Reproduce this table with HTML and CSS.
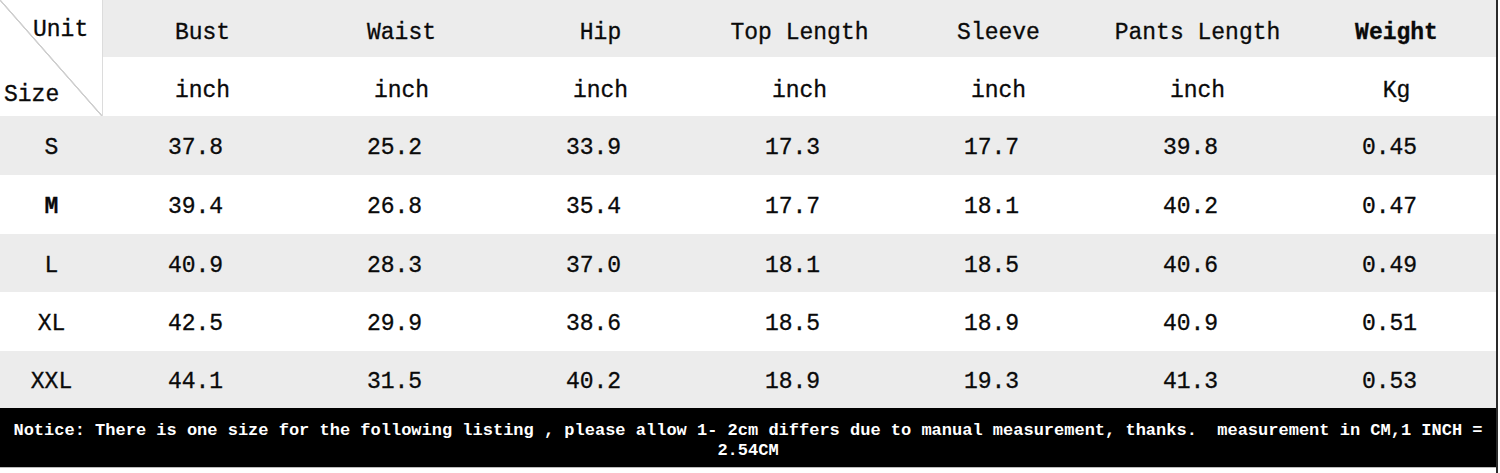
FILE: index.html
```html
<!DOCTYPE html>
<html>
<head>
<meta charset="utf-8">
<link rel="stylesheet" href="styles.css">
</head>
<body>
<div class="chart">
  <div class="table">
    <div class="corner">
      <span class="unit">Unit</span>
      <span class="size">Size</span>
    </div>
    <div class="hd gray">Bust</div>
    <div class="hd gray">Waist</div>
    <div class="hd gray">Hip</div>
    <div class="hd gray">Top Length</div>
    <div class="hd gray">Sleeve</div>
    <div class="hd gray">Pants Length</div>
    <div class="hd gray bold">Weight</div>

    <div class="hd">inch</div>
    <div class="hd">inch</div>
    <div class="hd">inch</div>
    <div class="hd">inch</div>
    <div class="hd">inch</div>
    <div class="hd">inch</div>
    <div class="hd">Kg</div>

    <div class="sz gray">S</div>
    <div class="num gray">37.8</div><div class="num gray">25.2</div><div class="num gray">33.9</div><div class="num gray">17.3</div><div class="num gray">17.7</div><div class="num gray">39.8</div><div class="num gray">0.45</div>

    <div class="sz bold">M</div>
    <div class="num">39.4</div><div class="num">26.8</div><div class="num">35.4</div><div class="num">17.7</div><div class="num">18.1</div><div class="num">40.2</div><div class="num">0.47</div>

    <div class="sz gray">L</div>
    <div class="num gray">40.9</div><div class="num gray">28.3</div><div class="num gray">37.0</div><div class="num gray">18.1</div><div class="num gray">18.5</div><div class="num gray">40.6</div><div class="num gray">0.49</div>

    <div class="sz">XL</div>
    <div class="num">42.5</div><div class="num">29.9</div><div class="num">38.6</div><div class="num">18.5</div><div class="num">18.9</div><div class="num">40.9</div><div class="num">0.51</div>

    <div class="sz gray">XXL</div>
    <div class="num gray">44.1</div><div class="num gray">31.5</div><div class="num gray">40.2</div><div class="num gray">18.9</div><div class="num gray">19.3</div><div class="num gray">41.3</div><div class="num gray">0.53</div>
  </div>
  <div class="notice">Notice: There is one size for the following listing , please allow 1- 2cm differs due to manual measurement, thanks.&nbsp; measurement in CM,1 INCH = 2.54CM</div>
</div>
</body>
</html>
```
FILE: styles.css
```css
html, body {
  margin: 0;
  padding: 0;
  background: #ffffff;
}
body {
  width: 1500px;
  height: 473px;
  overflow: hidden;
}
.chart {
  width: 1496px;
  border-right: 2px solid #2a2a2a;
  height: 473px;
  font-family: "Liberation Mono", "DejaVu Sans Mono", monospace;
  color: #0a0a0a;
}
.table {
  display: grid;
  grid-template-columns: 103px repeat(7, 199px);
  grid-template-rows: 57px 59px 59px 59px 58px 59px 57px;
  font-size: 23px;
}
.table > div {
  display: flex;
  align-items: center;
  justify-content: center;
  padding-top: 5px;
  box-sizing: border-box;
  -webkit-text-stroke: 0.3px #0a0a0a;
}
.table > .hd {
  padding-top: 8px;
}
.gray {
  background: #ececec;
}
.bold {
  font-weight: bold;
}
.table > .corner {
  grid-row: span 2;
  position: relative;
  display: block;
  padding: 0;
  border-right: 1px solid #dcdcdc;
  background: linear-gradient(to top right, transparent calc(50% - 1px), #cfcfcf calc(50% - 0.5px), #cfcfcf calc(50% + 0.5px), transparent calc(50% + 1px));
}
.unit {
  position: absolute;
  left: 33px;
  top: 17px;
}
.size {
  position: absolute;
  left: 4px;
  top: 82px;
}
.table > .num {
  padding-right: 14px;
}
.notice {
  background: #000;
  color: #fff;
  font-weight: bold;
  font-size: 17px;
  line-height: 20px;
  text-align: center;
  height: 60px;
  box-sizing: border-box;
  padding: 13px 6px 0;
  border-bottom: 1px solid #bbb;
}
```
